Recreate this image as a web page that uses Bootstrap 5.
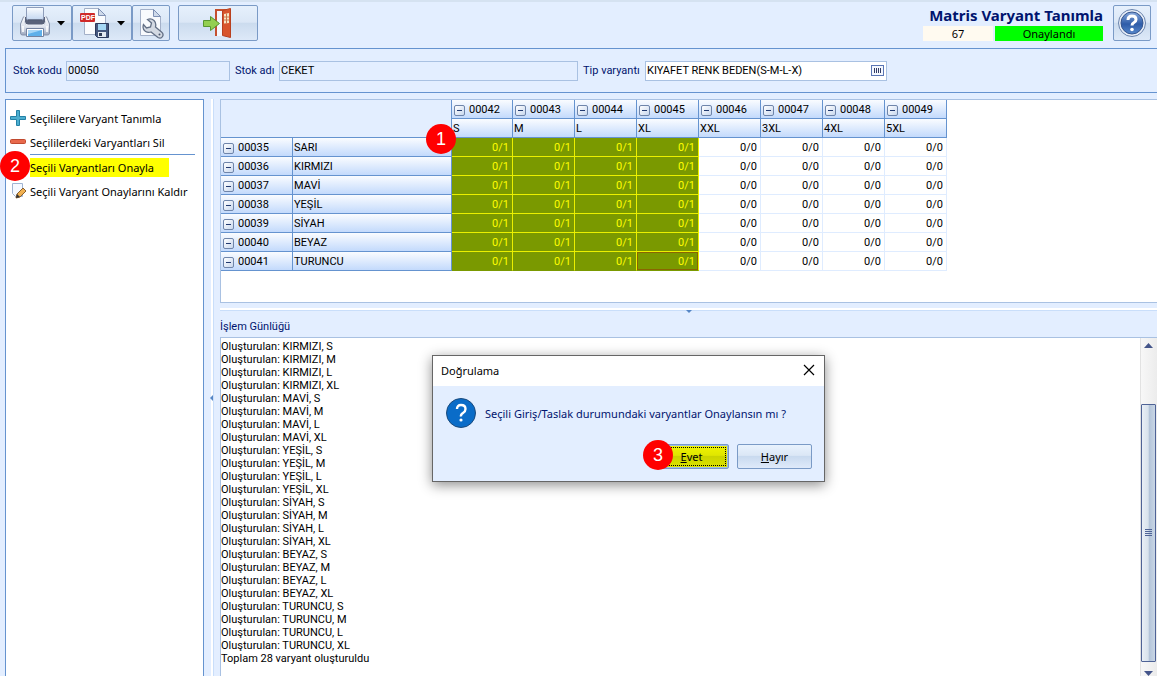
<!DOCTYPE html>
<html lang="tr">
<head>
<meta charset="utf-8">
<meta name="viewport" content="width=device-width, initial-scale=1">
<title>Matris Varyant Tanımla</title>
<link href="https://cdn.jsdelivr.net/npm/bootstrap@5.3.0/dist/css/bootstrap.min.css" rel="stylesheet">
<style>
:root{--line:#6593cf;--soft:#a9c1e2;--face:#e3eeff;--navy:#00146e}
body{font-family:"Noto Sans","Open Sans",sans-serif;font-size:11px;line-height:13px;color:#000;background:var(--face);border-top:2px solid #d5e2f1}
.narrow{font-family:Roboto,"Noto Sans",sans-serif}
.navy{color:var(--navy)}
.top-bar{padding:3px 6px 0 12px;margin-bottom:7px}
.title-box{margin-right:10px}
.tool{height:36px;border:1px solid #7a9ac6;border-radius:2px;padding:0;background:linear-gradient(#e6f0fc 0,#dbe7f6 48%,#cbdbee 50%,#dde9f8 100%)}
.tool svg{display:block}
.w-drop{width:60px}.w-icon{width:38px}.w-exit{width:80px}
.w-drop.tool{padding:0 6px 0 6px}
.screen-title{font-size:15px;line-height:21px;font-weight:700;color:var(--navy)}
.pill{height:15px;line-height:15px}
.pills{gap:2px}
.pill-no{width:70px;background:#fffaf0}.pill-ok{width:108px;background:#0f0}
.frame{border:1px solid var(--line)}
.filter-bar{height:45px;color:var(--navy);margin-left:5px;padding-left:7px}
.filter-bar label{flex-shrink:0}
.l-code{width:53px}.l-name{width:44px;margin-left:5px}.l-type{width:62px;margin-left:5px}
.fld{height:20px;border:1px solid var(--soft);background:var(--face);padding:0 1px;min-width:0;border-radius:0;color:#000}
.fld-code{width:164px}.fld-name{width:299px}.fld-type{width:242px;background:#fff}
.pick{width:13px;height:11px;border:1px solid #5b76b5;background:#f4f8ff;padding:0;display:flex;position:absolute;right:3px;top:4px}
.work{padding:6px 0 0 5px}
.side{width:199px;background:#fff;border-bottom:0;padding-top:6px}
.act{height:24px;border:0;background:none;padding:0 4px;display:flex;align-items:center;gap:4px;text-align:left;white-space:nowrap}
.act span{line-height:19px}
.act .hot{background:#ff0;padding-right:15px}
.rule{height:1px;background:var(--line);margin:0 8px 0 24px}
.v-split{width:16px;background:linear-gradient(90deg,var(--face) 7px,#fff 7px,#fff 9px,#c9defa 9px,#c9defa 10px,var(--face) 10px)}
.grid-pane{height:204px;background:#fff;border:1px solid var(--soft);border-right:0}
.matrix{border-collapse:separate;border-spacing:0;table-layout:fixed;width:726px}
.matrix col.c-code{width:72px}.matrix col.c-colour{width:159px}.matrix col.c-first{width:61px}.matrix col.c-size{width:62px}
.matrix th,.matrix td{height:19px;padding:2px 2px 0;font-weight:400;line-height:16px;white-space:nowrap;vertical-align:top}
.matrix td{padding-right:3px}
.matrix th{padding-left:1px;border-right:1px solid var(--line);border-bottom:1px solid var(--line);background:linear-gradient(#fafcff,#c3dafc)}
.matrix th.corner{background:var(--face)}
.matrix td{text-align:right;border-right:1px solid #dfecff;border-bottom:1px solid #dfecff}
.matrix td.sel{background:#7a9900;color:#ff0;border-color:#ebf000}
.matrix tr:last-child td.sel{border-bottom-color:#7a9900}
.matrix td.cur{box-shadow:inset 0 0 0 1px #8a6500}
.keyed{display:flex;align-items:center;gap:4px;height:16px;padding-left:1px}
.box{width:11px;height:11px;border:1px solid #6f85aa;border-radius:2px;background:linear-gradient(135deg,#fff,#c9d8ee);padding:0;display:flex;align-items:center;justify-content:center}
.box::before{content:"";width:5px;height:1px;background:#223a70}
.h-split{height:17px;padding-top:5px}
.h-split i{display:block;height:3px;background:#fff;border-bottom:1px solid #c9defa}
.log-title{height:17px}
.log-pane{background:#fff;border:1px solid var(--soft);border-right:0;border-bottom:0}
.log-list{padding:2px 0 0}
.bar{width:17px;padding-right:1px;background:linear-gradient(90deg,#f7f7f7,#ececec);border-left:1px solid #e2e2e2}
.bar button{border:0;background:none;padding:0;height:14px;display:flex;align-items:center;justify-content:center}
.bar button:last-child{align-items:flex-end}
.thumb{width:15px;height:258px;border:1px solid #4f6396;border-radius:1px;background:linear-gradient(90deg,#e9eff6 0,#d8e2ec 48%,#b3c4d9 55%,#c9d6e5 100%);display:flex;align-items:center;justify-content:center}
.step{position:absolute;width:30px;height:30px;border-radius:50%;background:red;color:#fff;font:18px/30px "Liberation Sans",sans-serif;text-align:center;z-index:5}
.step-1{left:426px;top:122px}.step-2{left:0;top:149px}.step-3{left:210px;top:84px}
.ask{position:absolute;left:432px;top:353px;width:393px;border:1px solid #666;background:var(--face);box-shadow:0 3px 12px rgba(0,0,0,.45);z-index:4}
.ask-head{height:30px;background:#fff;padding:0 9px 2px 8px}
.ask-body{padding:11px 12px 0}
.ask-foot{padding:15px 12px 12px}
.ask-btn{width:75px;height:25px;border:1px solid #7a9ac6;border-radius:2px;padding:0 0 1px;background:linear-gradient(#e9f2fd 0,#dbe7f6 45%,#c9daef 50%,#dfeafa 100%);color:#000}
.ask-yes{background:linear-gradient(#f1f500 0,#e0e600 45%,#cbd400 50%,#dde300 100%);box-shadow:inset -1px 0 #9bbce6,inset 0 1px #9bbce6,inset 0 -1px #9bbce6;outline:1px dotted #000;outline-offset:-4px}
.nudge{position:absolute;width:0;height:0;border:3px solid transparent}
.nudge-l{border-right-color:#5585c5;border-left:0;left:6px;top:296px}
.nudge-d{border-top-color:#5585c5;border-bottom:0;left:50%;top:7px;margin-left:-3px}
</style>
</head>
<body class="vh-100 overflow-hidden position-relative d-flex flex-column">
<header class="top-bar d-flex align-items-start">
  <div class="d-flex">
    <button class="tool w-drop d-flex align-items-center justify-content-between" aria-label="Yazdır">
      <svg width="32" height="32" viewBox="0 0 32 32"><defs><linearGradient id="pr" x2="0" y2="1"><stop stop-color="#fdfdfe"/><stop offset=".55" stop-color="#dfe4ee"/><stop offset="1" stop-color="#9aa6bd"/></linearGradient><linearGradient id="pp" x2="0" y2="1"><stop stop-color="#fbfdff"/><stop offset="1" stop-color="#c3d6f0"/></linearGradient></defs><path d="M4 11q0-1.500 2-1.500h20q2 0 2 1.500l2.500 6v9q0 2-2 2h-25q-2 0-2-2v-9z" fill="url(#pr)" stroke="#8793ab"/><path d="M5.500 9.500h21v5q0 3.500-3.500 3.500H9q-3.500 0-3.500-3.500z" fill="#59627a" stroke="#e9edf5"/><path d="M7.500.5h17V11q0 2-2 2h-13q-2 0-2-2z" fill="url(#pp)" stroke="#8e9dba"/><path d="M9 13h14" stroke="#363e54"/><path d="M4 19v6M28 19v6" stroke="#fff" stroke-width="1.500"/><path d="M7.500 21.500h17v8h-17z" fill="#fff" stroke="#7583a0"/><path d="M9 23h14v6H9z" fill="#5fb0ea"/><path d="M9 23h14L9 27z" fill="#a9d7f7"/></svg>
      <svg width="8" height="5"><path d="M0 0h8L4 4.500z"/></svg>
    </button>
    <button class="tool w-drop d-flex align-items-center justify-content-between" aria-label="PDF kaydet">
      <svg width="32" height="32" viewBox="0 0 32 32"><path d="M5.500 1.500h14l7 7v19h-21z" fill="#fafcfe" stroke="#a3b0c8"/><path d="M19.500 1.500v7h7z" fill="#cfdaea" stroke="#7e90b4"/><rect x="1" y="6" width="15" height="9" rx="1" fill="#cf2a2a"/><text x="2" y="13" font-family="Liberation Sans" font-weight="700" font-size="7" fill="#fff">PDF</text><path d="M16.500 16.500h13v14h-11l-2-2z" fill="#46587f" stroke="#2c3a5c"/><path d="M19 17h8v6h-8z" fill="#a5d8f5"/><path d="M19 25h8v5h-8z" fill="#e4eaf2"/><path d="M20 26h3v3h-3z" fill="#2f3b55"/></svg>
      <svg width="8" height="5"><path d="M0 0h8L4 4.500z"/></svg>
    </button>
    <button class="tool w-icon d-flex align-items-center justify-content-center" aria-label="Ayarlar">
      <svg width="28" height="32" viewBox="0 0 28 32"><path d="M3.500 2.500h13l7 7v19h-20z" fill="#f8fafd" stroke="#a3b0c8"/><path d="M16.500 2.500v7h7z" fill="#cfdaea" stroke="#7e90b4"/><path d="M10.500 12.500l4 3.500-1 4-4 1-3-3.500q-1.500 5 2 7 2.500 1.500 5.500.5l7 5.500q3 1.500 4.500-1t-1-4.500l-6-5q1-4-1.500-6.500-3-2.500-6.500-1z" fill="#d3d9e2" stroke="#626f85" stroke-width="1.300"/><circle cx="22.500" cy="27.500" r="1" fill="#4c5870"/></svg>
    </button>
    <button class="tool w-exit d-flex align-items-center justify-content-center ms-2" aria-label="Çıkış">
      <svg width="32" height="32" viewBox="0 0 32 32"><path d="M14 29V3h11" fill="none" stroke="#c4502f" stroke-width="2"/><path d="M15 4h6v25h-6z" fill="#f4f7fc"/><path d="M20.500 3.500l8-2v29l-8-2z" fill="#d8552d" stroke="#b8401f"/><path d="M22 7l5-1v10l-5 .5z" fill="#f7e6c4"/><path d="M24.500 6.500v10M22 10h5M22 13h5" stroke="#c9744a"/><path d="M1.500 13.500h7v-4l9 7-9 7v-4h-7z" fill="#93cf50" stroke="#57962f"/></svg>
    </button>
  </div>
  <div class="title-box ms-auto">
    <div class="screen-title text-end">Matris Varyant Tanımla</div>
    <div class="pills d-flex justify-content-end text-center"><div class="pill pill-no">67</div><div class="pill pill-ok">Onaylandı</div></div>
  </div>
  <button class="tool w-icon d-flex align-items-center justify-content-center" aria-label="Yardım">
    <svg width="30" height="30" viewBox="0 0 30 30"><defs><linearGradient id="hp" x2="0" y2="1"><stop stop-color="#88aadd"/><stop offset=".55" stop-color="#2e5ca8"/><stop offset="1" stop-color="#5688cc"/></linearGradient></defs><circle cx="15" cy="15" r="13.500" fill="#e8eef7" stroke="#6983ad"/><circle cx="15" cy="15" r="11" fill="url(#hp)" stroke="#36568e"/><path d="M11 12q0-4 4-4t4 3.500q0 2-2 3t-2 3" fill="none" stroke="#fff" stroke-width="3"/><circle cx="15" cy="21.500" r="1.800" fill="#fff"/></svg>
  </button>
</header>

<form class="filter-bar frame narrow border-end-0 d-flex align-items-center flex-shrink-0">
  <label class="l-code" for="kod">Stok kodu</label>
  <input id="kod" class="fld fld-code" value="00050" readonly>
  <label class="l-name" for="ad">Stok adı</label>
  <input id="ad" class="fld fld-name" value="CEKET" readonly>
  <label class="l-type" for="tip">Tip varyantı</label>
  <div class="position-relative d-flex"><input id="tip" class="fld fld-type" value="KIYAFET RENK BEDEN(S-M-L-X)">
    <button type="button" class="pick" aria-label="Seç"><svg width="11" height="9"><path d="M2.500 2v5M4.500 2v5M6.500 2v5M8.500 2v5" stroke="#333b63"/></svg></button></div>
</form>

<main class="work d-flex flex-grow-1 overflow-hidden">
  <nav class="side frame flex-shrink-0">
    <button class="act"><svg width="16" height="16"><path d="M6.500.5h3v6h6v3h-6v6h-3v-6h-6v-3h6z" fill="#4caed0" stroke="#2381a6"/></svg><span>Seçililere Varyant Tanımla</span></button>
    <button class="act"><svg width="16" height="16"><rect x=".5" y="5.500" width="15" height="4" rx="1" fill="#e8694c" stroke="#c0492f"/></svg><span>Seçililerdeki Varyantları Sil</span></button>
    <div class="rule"></div>
    <button class="act"><svg width="16" height="16"></svg><span class="hot">Seçili Varyantları Onayla</span></button>
    <button class="act"><svg width="16" height="16"><path d="M2.500.5h10v13h-7l-3-3z" fill="#f5f9ff" stroke="#a0b4d2"/><path d="M6 15l1-4 6-6 3 3-6 6z" fill="#f0b050" stroke="#8a6030"/><path d="M6 15l1-4 3 3z" fill="#333"/></svg><span>Seçili Varyant Onaylarını Kaldır</span></button>
  </nav>
  <div class="v-split flex-shrink-0 position-relative"><i class="nudge nudge-l"></i></div>
  <div class="narrow d-flex flex-column flex-grow-1 overflow-hidden">
    <section class="grid-pane flex-shrink-0">
      <table class="matrix">
        <colgroup><col class="c-code"><col class="c-colour"><col class="c-first"><col class="c-size" span="7"></colgroup>
        <thead id="head"></thead><tbody id="rows"></tbody>
      </table>
    </section>
    <div class="h-split flex-shrink-0 position-relative"><i></i><b class="nudge nudge-d"></b></div>
    <div class="log-title navy">İşlem Günlüğü</div>
    <section class="log-pane d-flex flex-grow-1 overflow-hidden">
      <ul id="log" class="log-list list-unstyled flex-grow-1 m-0"></ul>
      <div class="bar d-flex flex-column align-items-center flex-shrink-0">
        <button aria-label="Yukarı"><svg width="9" height="5"><path d="M0 5h9L4.500 0z" fill="#44558a"/></svg></button>
        <div class="thumb mt-auto flex-shrink-0"><svg width="7" height="8"><path d="M0 .5h7M0 2.500h7M0 4.500h7M0 6.500h7" stroke="#4f6396"/></svg></div>
        <button aria-label="Aşağı"><svg width="9" height="5"><path d="M0 0h9L4.500 5z" fill="#44558a"/></svg></button>
      </div>
    </section>
  </div>
</main>

<div class="step step-1">1</div>
<div class="step step-2">2</div>

<div class="ask" role="dialog" aria-labelledby="askTitle">
  <div class="ask-head d-flex align-items-center justify-content-between"><span id="askTitle">Doğrulama</span>
    <button class="border-0 bg-transparent p-0 d-flex" aria-label="Kapat"><svg width="12" height="12"><path d="M1 1l10 10M11 1L1 11" stroke="#000" stroke-width="1.200"/></svg></button></div>
  <div class="ask-body d-flex align-items-center gap-2">
    <svg width="32" height="32" viewBox="0 0 32 32"><circle cx="16" cy="16" r="14.500" fill="#0a6cc8" stroke="#1b4a7c"/><path d="M12 12q0-4 4-4 4.500 0 4.500 4 0 2.500-2.500 4t-2 3.500" fill="none" stroke="#fff" stroke-width="2.400"/><circle cx="16" cy="23" r="1.600" fill="#fff"/></svg>
    <span class="navy">Seçili Giriş/Taslak durumundaki varyantlar Onaylansın mı ?</span>
  </div>
  <div class="ask-foot d-flex justify-content-end gap-2">
    <button class="ask-btn ask-yes"><u>E</u>vet</button>
    <button class="ask-btn"><u>H</u>ayır</button>
  </div>
  <div class="step step-3">3</div>
</div>

<script>
const colours = ['SARI','KIRMIZI','MAVİ','YEŞİL','SİYAH','BEYAZ','TURUNCU'];
const sizes = ['S','M','L','XL','XXL','3XL','4XL','5XL'];
const keyed = n => `<th><div class="keyed"><button class="box" aria-label="Daralt"></button>000${n}</div></th>`;
document.getElementById('head').innerHTML =
  '<tr><th class="corner" colspan="2" rowspan="2"></th>' + sizes.map((s, i) => keyed(42 + i)).join('') + '</tr>' +
  '<tr>' + sizes.map(s => `<th>${s}</th>`).join('') + '</tr>';
document.getElementById('rows').innerHTML = colours.map((c, r) =>
  `<tr>${keyed(35 + r)}<th>${c}</th>` + sizes.map((s, i) =>
    i < 4 ? `<td class="sel${r === 6 && i === 3 ? ' cur' : ''}">0/1</td>` : '<td>0/0</td>').join('') + '</tr>').join('');
document.getElementById('log').innerHTML = colours.slice(1).flatMap(c =>
  sizes.slice(0, 4).map(s => `<li>Oluşturulan: ${c}, ${s}</li>`)).join('') + '<li>Toplam 28 varyant oluşturuldu</li>';
</script>
<script src="https://cdn.jsdelivr.net/npm/bootstrap@5.3.0/dist/js/bootstrap.bundle.min.js"></script>
</body>
</html>
